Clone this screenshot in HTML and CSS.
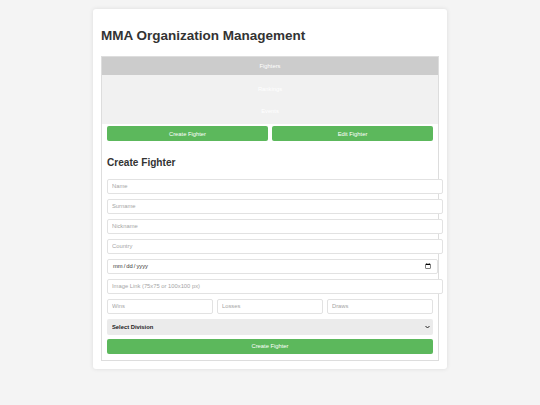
FILE: index.html
```html
<!DOCTYPE html>
<html lang="en">
<head>
  <meta charset="UTF-8" />
  <meta name="viewport" content="width=device-width, initial-scale=1.0" />
  <title>MMA Organization Management</title>
  <link rel="stylesheet" href="styles.css">
</head>
<body>

  <div class="container">
    <h1>MMA Organization Management</h1>

    <div class="panel">
      <div class="tabs">
        <button class="tablink active" onclick="openTab('fighters', this)">Fighters</button>
        <button class="tablink" onclick="openTab('rankings', this)">Rankings</button>
        <button class="tablink" onclick="openTab('events', this)">Events</button>
      </div>

      <div id="fighters" class="tabcontent">
        <div class="actions">
          <button class="btn" type="button">Create Fighter</button>
          <button class="btn" type="button">Edit Fighter</button>
        </div>

        <h2>Create Fighter</h2>

        <form id="fighterForm" onsubmit="return false;">
          <input type="text" placeholder="Name" />
          <input type="text" placeholder="Surname" />
          <input type="text" placeholder="Nickname" />
          <input type="text" placeholder="Country" />
          <input type="date" class="date" />
          <input type="text" placeholder="Image Link (75x75 or 100x100 px)" />

          <div class="record">
            <input type="number" placeholder="Wins" />
            <input type="number" placeholder="Losses" />
            <input type="number" placeholder="Draws" />
          </div>

          <div class="select-wrap">
            <select class="division">
              <option>Select Division</option>
              <option>Flyweight</option>
              <option>Bantamweight</option>
              <option>Featherweight</option>
              <option>Lightweight</option>
              <option>Welterweight</option>
              <option>Middleweight</option>
              <option>Light Heavyweight</option>
              <option>Heavyweight</option>
            </select>
            <svg class="chevron" width="5" height="4" viewBox="0 0 10 7">
              <path d="M1 1.5 L5 5.5 L9 1.5" fill="none" stroke="#222" stroke-width="2"/>
            </svg>
          </div>

          <button class="btn submit" type="submit">Create Fighter</button>
        </form>
      </div>
    </div>
  </div>

  <script>
    function openTab(name, el) {
      document.querySelectorAll('.tablink').forEach(b => b.classList.remove('active'));
      el.classList.add('active');
    }
  </script>

</body>
</html>
```

FILE: styles.css
```css
body {
  font-family: 'Liberation Sans', Arial, sans-serif;
  background-color: #f4f4f4;
  margin: 0;
  padding: 0;
  color: #333;
}
.container {
  max-width: 338px;
  margin: 9px auto;
  padding: 8px;
  background-color: #fff;
  border-radius: 3px;
  box-shadow: 0 0 4px rgba(0,0,0,0.1);
}
h1 {
  font-size: 13.5px;
  margin: 11px 0 13px;
}
h2 {
  font-size: 10.1px;
  margin: 15.5px 0 11px;
}
.panel {
  border: 1px solid #ddd;
}
.tabs {
  background-color: #f1f1f1;
  padding-bottom: 1px;
}
.tablink {
  display: block;
  width: 100%;
  height: 18px;
  margin-bottom: 4.6px;
  padding: 0;
  border: none;
  background-color: inherit;
  color: #fff;
  font-family: inherit;
  font-size: 5.8px;
  cursor: pointer;
}
.tablink:last-child {
  margin-bottom: 3px;
}
.tablink.active {
  background-color: #ccc;
}
.tabcontent {
  padding: 2px 5px 6px;
}
.actions {
  display: flex;
  gap: 4px;
}
.btn {
  flex: 1;
  height: 15px;
  padding: 0;
  border: none;
  border-radius: 2px;
  background-color: #5cb85c;
  color: #fff;
  font-family: inherit;
  font-size: 5.8px;
  cursor: pointer;
}
.btn:hover {
  background-color: #4cae4c;
}
form input {
  display: block;
  width: 100%;
  height: 13px;
  margin: 0 0 5px;
  padding: 0 4px;
  border: 1px solid #e2e2e2;
  border-radius: 2px;
  font-family: inherit;
  font-size: 5.8px;
  color: #333;
}
form input::placeholder {
  color: #a5a5a5;
}
form input.date {
  width: calc(100% - 5px);
}
.record {
  display: flex;
  gap: 4px;
  margin-bottom: 5px;
}
.record input {
  flex: 1;
  width: auto;
  min-width: 0;
  height: 15px;
  box-sizing: border-box;
  margin: 0;
}
.select-wrap {
  position: relative;
  margin-bottom: 3.5px;
}
.division {
  display: block;
  width: 100%;
  height: 16.5px;
  padding: 0 10px 0 5px;
  border: none;
  border-radius: 2px;
  background-color: #ebebeb;
  color: #222;
  font-family: inherit;
  font-size: 5.8px;
  font-weight: bold;
  appearance: none;
  -webkit-appearance: none;
}
.chevron {
  position: absolute;
  right: 3px;
  top: 6.5px;
  pointer-events: none;
}
.submit {
  display: block;
  width: 100%;
}
```
